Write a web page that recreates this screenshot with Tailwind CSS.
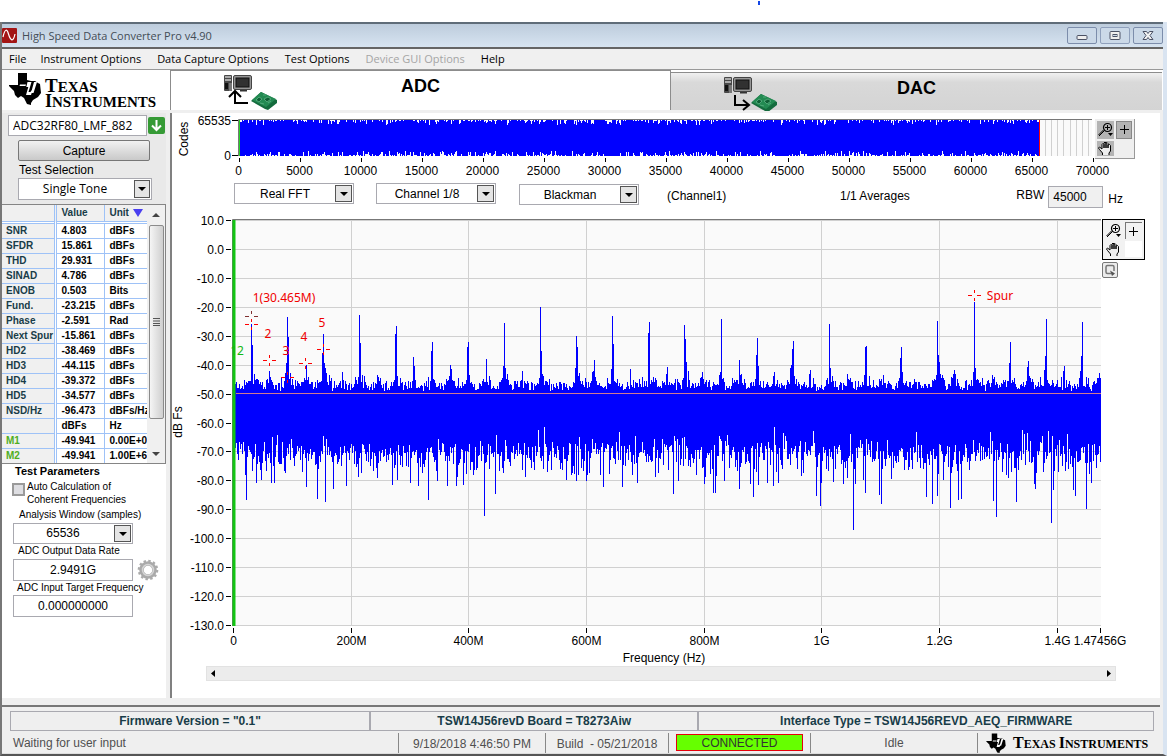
<!DOCTYPE html>
<html lang="en">
<head>
<meta charset="utf-8">
<title>High Speed Data Converter Pro v4.90</title>
<script src="https://cdn.jsdelivr.net/npm/@tailwindcss/browser@4"></script>
</head>
<body class="flex min-h-screen flex-col bg-white font-['Liberation_Sans',Arial,sans-serif] text-[12px] leading-4 text-black">
<svg class="hidden" aria-hidden="true">
  <symbol id="texas" viewBox="0 0 32 33"><path d="M9 1h9v7l4 1h4l3 2 2 1 1 9-3 4-5 3-2 3v2l-4-1-3-6-3-2-3 2-3-3-1-4-5-5 0-1h9z"/><path d="M19.500 4.500h4l-1 3h-3.500zM18.500 10h4l-3 10h2l.8-1.500h1.200l-1.500 4.500h-5l2.300-8h-2zM25 10h3l-3.500 11h-2.500zM11 12.500h6l-.5 1.500h-6z" fill="#fff"/></symbol>
  <symbol id="computer" viewBox="0 0 29 17"><rect x="0" y="0" width="8" height="16" rx="1" fill="#484848"/><path d="M1 2h6M1 5h6" stroke="#c9c9c9" stroke-width="1.500"/><rect x="1" y="8" width="3" height="6" fill="#111"/><rect x="5" y="8" width="3" height="8" fill="#777"/><rect x="9.500" y=".5" width="18" height="14" rx="1.500" fill="#969696" stroke="#444"/><rect x="12" y="3" width="13" height="9" fill="#313131" stroke="#111"/><path d="M16 15h7v1.500h-7z" fill="#333"/></symbol>
  <symbol id="board" viewBox="0 0 26 18"><path d="M0 9L10 0 26 8v3L17 18 14 17z" fill="#146b3d"/><path d="M1 8L10 0 25 7 15 15z" fill="#238a52"/><path d="M5 8l3-3 3 2-3 3zM13 7l4-2 3 2-4 3zM12 3l3 0M9 11l4 1M17 11l3-2" fill="#0f5f35" stroke="#5cb384" stroke-width=".8"/></symbol>
  <symbol id="zoomer" viewBox="0 0 17 15"><circle cx="10.500" cy="5.500" r="4" fill="none" stroke="#000" stroke-width="1.200"/><path d="M10.500 3v5M8 5.500h5" stroke="#000"/><path d="M7.500 8.500L2 14M6.500 8L1.500 13" stroke="#000"/><path d="M11 11h5l-2.500 3z"/></symbol>
  <symbol id="hand" viewBox="0 0 17 15"><path d="M5.500 14V12L2.500 8.500 1.500 7 2.500 6 5 8V3.500L6 2.500 7 3.500V7 2L8 1 9 2V7 2L10 1.500 11 2.500V7 4L12.500 3.500 13.500 4.500V10L12 12V14" fill="#eee" stroke="#000"/></symbol>
</svg>

<header class="flex h-[22px] justify-end pr-[407px] text-blue-700"><span class="mt-px h-[4px] w-[2px] bg-blue-700"></span></header>

<main class="flex grow flex-col border-r-4 border-b-2 border-l-2 border-r-[#d9e4f1] border-b-[#555] border-l-[#777] bg-[#efefef]">
  <div class="flex h-[27px] shrink-0 items-center border-t-2 border-b-2 border-t-[#5f6c78] border-b-[#656565] bg-linear-to-b from-[#bdccdc] to-[#d7e4f1] font-['Open_Sans','Noto_Sans',sans-serif] text-[#444d56]">
    <svg class="mr-[5px] size-[15px]" viewBox="0 0 15 15"><rect width="15" height="15" rx="1" fill="#a31515"/><path d="M1 9C3 0 5 1 6.500 6S11 16 13 6" fill="none" stroke="#fff" stroke-width="1.200"/></svg>
    <h1 class="grow text-[11px]">High Speed Data Converter Pro v4.90</h1>
    <div class="flex gap-[3px]">
      <button aria-label="Minimize" class="flex h-[17px] w-[30px] items-center justify-center rounded-xs border border-[#7c8dab] bg-[#cbd9e8]"><svg class="h-[12px] w-[14px]" viewBox="0 0 14 12"><rect x="2" y="5.500" width="10" height="4" rx="1" fill="#eee" stroke="#4b5164"/></svg></button>
      <button aria-label="Maximize" class="flex h-[17px] w-[30px] items-center justify-center rounded-xs border border-[#8fa0bc] bg-[#cbd9e8]"><svg class="h-[12px] w-[14px]" viewBox="0 0 14 12"><rect x="2" y="1.500" width="10" height="8" rx="1" fill="#eee" stroke="#4b5164"/><rect x="5" y="4.500" width="4" height="2" fill="#cbd9e8" stroke="#4b5164"/></svg></button>
      <button aria-label="Close" class="flex h-[17px] w-[30px] items-center justify-center rounded-xs border border-[#7c8dab] bg-[#cbd9e8]"><svg class="h-[12px] w-[14px]" viewBox="0 0 14 12"><path d="M2 1.500h3.500L7 3.500l1.500-2H12L9 5.500l3 4H8.500L7 7.500l-1.500 2H2l3-4z" fill="#f2f2f2" stroke="#4b5164"/></svg></button>
    </div>
  </div>

  <nav class="flex h-[21px] shrink-0 items-center border-b border-[#999] bg-[#f0f0f0] pl-[7px] font-['Open_Sans','Noto_Sans',sans-serif] text-[11px]">
    <button class="mr-[14px]">File</button><button class="mr-[16px]">Instrument Options</button><button class="mr-[16px]">Data Capture Options</button><button class="mr-[16px]">Test Options</button><button disabled class="mr-[16px] text-[#a5a5a5]">Device GUI Options</button><button>Help</button>
  </nav>

  <div class="flex h-10 shrink-0 bg-white pr-[1px]">
    <div class="flex w-[168px] shrink-0 items-start gap-1 pl-[7px] font-['Liberation_Serif',serif]">
      <svg class="mt-[2px] h-[33px] w-[32px]"><use href="#texas"/></svg>
      <p class="mt-[9px] text-[15px] leading-[14px] font-bold"><span class="text-[19px]">T</span>EXAS<br><span class="text-[18px]">I</span>NSTRUMENTS</p>
    </div>
    <button class="grid flex-[499] grid-cols-[1fr_auto_1fr] items-start border border-b-0 border-[#8c8c8c] bg-white">
      <svg class="ml-[53px] mt-[4px] h-[36px] w-[54px]" viewBox="0 0 54 36"><use href="#computer" width="29" height="17"/><use href="#board" x="27" y="17" width="26" height="18"/><path d="M24 28H11V17M5 22l6-6 6 6" fill="none" stroke="#000" stroke-width="2"/></svg>
      <span class="mt-[5px] text-[18px] leading-5 font-bold">ADC</span>
    </button>
    <button class="mt-[2px] grid flex-[491] grid-cols-[1fr_auto_1fr] items-start border-t border-[#8c8c8c] bg-linear-to-b from-[#f0f0f0] via-[#d9d9d9] via-25% to-[#d4d4d4]">
      <svg class="ml-[53px] mt-[4px] h-[34px] w-[54px]" viewBox="0 0 54 34"><use href="#computer" width="29" height="17"/><use href="#board" x="27" y="17" width="26" height="18"/><path d="M11 18V28H24M19 23l6 5-6 5" fill="none" stroke="#000" stroke-width="2"/></svg>
      <span class="mt-[5px] text-[18px] leading-5 font-bold">DAC</span>
    </button>
  </div>

  <div class="mt-[3px] flex grow pr-[3px]">
    <aside class="flex w-[164px] shrink-0 flex-col bg-white">
      <section class="flex h-[91px] flex-col bg-[#e9e9e9] pl-[6px]">
        <div class="flex items-center gap-px pt-[2px]">
          <input aria-label="Device" value="ADC32RF80_LMF_882" class="h-[21px] w-[139px] border border-[#a9a9b0] bg-white px-1 font-['Open_Sans',sans-serif] text-[12px]">
          <button aria-label="Load device" class="flex size-[17px] items-center justify-center rounded-xs bg-[#359a35]"><svg class="size-[13px]" viewBox="0 0 13 13"><path d="M6.500 1v10M2 6.500l4.500 4.500 4.500-4.500" fill="none" stroke="#fff" stroke-width="2"/></svg></button>
        </div>
        <button class="mt-[4px] ml-[10px] h-[21px] w-[132px] shrink-0 rounded-xs border border-[#777] bg-linear-to-b from-[#f2f2f2] to-[#c9c9c9] text-[12px] leading-4">Capture</button>
        <label for="tone" class="ml-[11px] mt-[1px]">Test Selection</label>
        <div class="relative ml-[10px] w-[134px]">
          <select id="tone" class="h-[22px] w-full appearance-none border border-[#a9a9b0] bg-white pr-[20px] font-['Open_Sans',sans-serif] text-[12px] [text-align-last:center]"><option>Single Tone</option></select>
          <span class="pointer-events-none absolute top-[2px] right-[2px] flex h-[18px] w-[16px] items-center justify-center border border-[#555] bg-[#e4e4e4]"><svg class="h-1 w-2" viewBox="0 0 8 4"><path d="M0 0h8L4 4z"/></svg></span>
        </div>
      </section>
      <div class="flex h-[260px] shrink-0 overflow-hidden border-y border-r border-[#858585] bg-[#f0f0f0]">
        <div class="w-[145px] overflow-hidden bg-white">
          <table class="w-[170px] table-fixed border-collapse text-left text-[10px] leading-[14px] font-bold">
            <colgroup><col class="w-[53px]"><col class="w-[49px]"><col class="w-[68px]"></colgroup>
            <thead class="bg-[#f0f0f0] text-[#183c48]"><tr class="h-[17px] border-b-3 border-double border-[#9ec2f7]"><th class="border-r-3 border-double border-[#9ec2f7]"></th><th class="border-r border-[#9ec2f7] pl-[5px]">Value</th><th class="pl-[5px]"><span class="flex items-center gap-1">Unit<svg class="h-2 w-[10px]" viewBox="0 0 10 8"><path d="M0 0h10L5 8z" fill="#4a3ff0"/></svg></span></th></tr></thead>
            <tbody id="metrics"></tbody>
          </table>
        </div>
        <div class="flex w-[18px] flex-col items-center">
          <svg class="my-2 h-[4px] w-[8px] shrink-0" viewBox="0 0 8 4"><path d="M0 4h8L4 0z" fill="#444"/></svg>
          <div class="flex h-[194px] w-[15px] shrink-0 items-center justify-center rounded-xs border border-[#8b8b8b] bg-linear-to-r from-[#f5f5f5] to-[#cfcfcf]"><svg class="size-2" viewBox="0 0 8 8"><path d="M1 .5h7M1 3h7M1 5.500h7M1 7.500h7" stroke="#555"/></svg></div>
          <svg class="mt-[33px] h-[4px] w-[8px] shrink-0" viewBox="0 0 8 4"><path d="M0 0h8L4 4z" fill="#444"/></svg>
        </div>
      </div>
      <section class="flex flex-col pl-[11px] text-[10px] leading-[13px]">
        <h2 class="ml-[2px] text-[11px] leading-[15px] font-bold">Test Parameters</h2>
        <div class="flex items-start gap-[2px] pt-px"><input id="auto" type="checkbox" class="mt-[3px] -ml-px size-[13px] shrink-0 appearance-none border-2 border-[#9a9a9a] bg-[#dedee2]"><label for="auto">Auto Calculation of<br>Coherent Frequencies</label></div>
        <label for="win" class="ml-[6px] mt-[2px]">Analysis Window (samples)</label>
        <div class="relative mt-[2px] w-[120px]">
          <select id="win" class="h-[21px] w-full appearance-none border border-[#a9a9b0] bg-white pr-[20px] text-[12px] [text-align-last:center]"><option>65536</option></select>
          <span class="pointer-events-none absolute top-[2px] right-[2px] flex h-[17px] w-[17px] items-center justify-center border border-[#555] bg-[#e4e4e4]"><svg class="h-1 w-2" viewBox="0 0 8 4"><path d="M0 0h8L4 4z"/></svg></span>
        </div>
        <label for="rate" class="ml-[5px]">ADC Output Data Rate</label>
        <div class="mt-[2px] flex items-center gap-1"><input id="rate" value="2.9491G" class="h-[22px] w-[120px] border border-[#a9a9b0] text-center text-[12px]">
          <button aria-label="Settings"><svg class="size-[22px]" viewBox="-11 -11 22 22"><circle r="6.500" fill="none" stroke="#aaa" stroke-width="4.500"/><circle r="9" fill="none" stroke="#aaa" stroke-width="2.600" stroke-dasharray="2.400 2.312"/><circle r="5.500" fill="none" stroke="#d5d5d5" stroke-width="1.500"/></svg></button></div>
        <label for="freq" class="ml-[4px]">ADC Input Target Frequency</label>
        <input id="freq" value="0.000000000" class="mt-px h-[22px] w-[120px] border border-[#a9a9b0] text-center text-[12px]">
      </section>
    </aside>

    <section class="ml-[4px] grow border-l-2 border-[#808080] bg-white">
      <div class="flex pr-[25px]">
        <svg class="min-w-0 flex-1 overflow-visible" viewBox="172 113 923 69" font-size="12" text-anchor="middle" role="img" aria-label="Codes">
          <text transform="translate(188 139) rotate(-90)">Codes</text>
          <text x="231" y="125" text-anchor="end">65535</text><text x="231" y="160" text-anchor="end">0</text>
          <path d="M232 120.500h6M232 155.500h6" stroke="#000"/>
          <rect x="239" y="120" width="853" height="36" fill="#fafafa"/>
          <path d="M1045.500 120v36M1051.500 120v36M1057.500 120v36M1063.500 120v36M1070.500 120v36M1076.500 120v36M1082.500 120v36M1088.500 120v36" stroke="#d0d0d0"/>
          <path id="codes" stroke="#0000ff" shape-rendering="crispEdges"/>
          <path d="M238.500 156V119.500H1092" fill="none" stroke="#777"/><path d="M239.500 120v36" stroke="#26d426"/><path d="M1039.500 120v36" stroke="red"/>
          <g id="codeAxis"></g>
        </svg>
        <div class="mt-[6px] grid h-[40px] w-[40px] shrink-0 grid-cols-2 gap-[2px] border-r border-b border-[#999] bg-[#efefef] p-[2px]">
          <button aria-label="Zoom" class="bg-[#b4b4b4]"><svg class="h-[15px] w-[17px]"><use href="#zoomer"/></svg></button>
          <button aria-label="Cursor" class="border border-[#888] bg-[#b4b4b4]"><svg class="h-[15px] w-[15px]" viewBox="0 0 15 15"><path d="M7.500 3v9M3 7.500h9" stroke="#000"/></svg></button>
          <button aria-label="Pan" class="bg-[#b4b4b4]"><svg class="h-[15px] w-[17px]"><use href="#hand"/></svg></button>
        </div>
      </div>

      <div class="flex h-[26px] items-start pt-px pl-[62px] whitespace-nowrap">
        <div class="relative mr-[22px] w-[120px]"><select aria-label="Plot type" class="h-[21px] w-full appearance-none border border-[#a9a9b0] bg-white pr-[18px] [text-align-last:center]"><option>Real FFT</option></select><span class="pointer-events-none absolute top-[2px] right-[2px] flex size-[17px] items-center justify-center border border-[#555] bg-[#e4e4e4]"><svg class="h-1 w-2" viewBox="0 0 8 4"><path d="M0 0h8L4 4z"/></svg></span></div>
        <div class="relative mr-[23px] w-[120px]"><select aria-label="Channel" class="h-[21px] w-full appearance-none border border-[#a9a9b0] bg-white pr-[18px] [text-align-last:center]"><option>Channel 1/8</option></select><span class="pointer-events-none absolute top-[2px] right-[2px] flex size-[17px] items-center justify-center border border-[#555] bg-[#e4e4e4]"><svg class="h-1 w-2" viewBox="0 0 8 4"><path d="M0 0h8L4 4z"/></svg></span></div>
        <div class="relative mt-px mr-[28px] w-[120px]"><select aria-label="Window" class="h-[21px] w-full appearance-none border border-[#a9a9b0] bg-white pr-[18px] [text-align-last:center]"><option>Blackman</option></select><span class="pointer-events-none absolute top-[2px] right-[2px] flex size-[17px] items-center justify-center border border-[#555] bg-[#e4e4e4]"><svg class="h-1 w-2" viewBox="0 0 8 4"><path d="M0 0h8L4 4z"/></svg></span></div>
        <span class="mt-[5px] w-[173px]">(Channel1)</span>
        <span class="mt-[5px] grow">1/1 Averages</span>
        <label for="rbw" class="mt-1 mr-1">RBW</label>
        <input id="rbw" value="45000" class="mt-[3px] h-[22px] w-[55px] border border-[#a9a9b0] bg-[#f0f0f0] px-1 text-[12px]">
        <span class="mt-2 mr-[37px] ml-[5px] text-[12px]">Hz</span>
      </div>

      <div class="flex pr-[15px]">
        <svg class="min-w-0 flex-1 overflow-visible" viewBox="172 208 930 458" font-size="12" text-anchor="middle" role="img" aria-label="FFT spectrum">
          <rect x="232" y="220" width="869" height="406" fill="#fafafa"/>
          <g id="fftAxis"></g>
          <path id="fft" stroke="#0000ff" shape-rendering="crispEdges"/>
          <path d="M236 393.500H1101" stroke="#d07a90"/>
          <path d="M232.500 626V219.500H1101" fill="none" stroke="#777"/>
          <path d="M234 220v406" stroke="#12c512" stroke-width="3"/>
          <text x="237" y="355" fill="#12b812" font-family="Noto Sans">12</text>
          <g id="cursors" fill="none" stroke="red"></g>
          <g fill="#f00000" font-family="Noto Sans"><text x="284" y="302">1(30.465M)</text><text x="268" y="338">2</text><text x="286" y="355">3</text><text x="304" y="341">4</text><text x="322" y="327">5</text><text x="1000" y="300">Spur</text></g>
          <text transform="translate(182 422) rotate(-90)">dB Fs</text>
          <text x="664" y="662">Frequency (Hz)</text>
        </svg>
        <div class="mt-[11px] w-[43px] shrink-0">
          <div class="grid h-[41px] grid-cols-2 gap-[2px] border border-black bg-[#f2f2f2] p-[2px]">
            <button aria-label="Zoom graph"><svg class="h-[15px] w-[17px]"><use href="#zoomer"/></svg></button>
            <button aria-label="Graph cursor" class="border-t border-l border-[#777]"><svg class="h-[15px] w-[15px]" viewBox="0 0 15 15"><path d="M7.500 3v9M3 7.500h9" stroke="#000"/></svg></button>
            <button aria-label="Pan graph"><svg class="h-[15px] w-[17px]"><use href="#hand"/></svg></button><span class="bg-white"></span>
          </div>
          <button aria-label="Reset graph" class="mt-[2px] block size-4 rounded-xs border border-[#777] bg-[#ececec]"><svg class="size-[14px]" viewBox="0 0 14 14"><path d="M8 10.500H4.500Q3 10.500 3 9V4Q3 2.500 4.500 2.500h5Q11 2.500 11 4v4" fill="none" stroke="#777" stroke-width="1.500"/><path d="M7 7.500l5 3-3 2.500z" fill="#555"/></svg></button>
        </div>
      </div>
      <div class="mr-[44px] ml-[34px] flex h-[15px] items-center justify-between border border-[#e2e2e2] bg-[#ececec] px-1"><svg class="h-[7px] w-1" viewBox="0 0 4 7"><path d="M4 0v7L0 3.500z"/></svg><svg class="h-[7px] w-1" viewBox="0 0 4 7"><path d="M0 0v7l4-3.500z"/></svg></div>
    </section>
  </div>

  <footer class="mt-[7px] mr-[3px] shrink-0 border-t-2 border-[#777] pt-[4px]">
    <div class="mr-[6px] ml-[8px] flex h-[20px] text-center leading-[19px] font-bold text-[#183c48]">
      <p class="flex-[360] border border-[#a9a9b0]">Firmware Version = "0.1"</p><p class="flex-[328] border border-[#a9a9b0]">TSW14J56revD Board = T8273Aiw</p><p class="flex-[456] border border-[#a9a9b0]">Interface Type = TSW14J56REVD_AEQ_FIRMWARE</p>
    </div>
    <div class="mt-[2px] flex h-[21px] items-center border-b border-[#ddd] text-[#505050]">
      <span class="grow pl-[11px]">Waiting for user input</span>
      <span class="h-full w-[147px] border-l border-[#888] pt-[3px] text-center">9/18/2018 4:46:50 PM</span>
      <span class="h-full w-[123px] border-l border-[#888] pt-[3px] text-center whitespace-pre">Build  - 05/21/2018</span>
      <span class="h-full w-[142px] border-l border-[#888] px-[7px] pt-px"><span class="block h-[17px] border border-red-600 bg-[#66ff00] text-center leading-[17px] text-[#333]">CONNECTED</span></span>
      <span class="h-full w-[167px] border-l border-[#888] pt-[2px] text-center">Idle</span>
      <span class="flex h-full w-[183px] items-center gap-[7px] border-l border-[#888] pl-[8px] font-['Liberation_Serif',serif] text-[12px] font-bold whitespace-nowrap text-black"><svg class="size-[20px]"><use href="#texas"/></svg><span><span class="text-[16px]">T</span>EXAS <span class="text-[16px]">I</span>NSTRUMENTS</span></span>
    </div>
  </footer>
</main>

<script>
const rows = [['SNR','4.803','dBFs'],['SFDR','15.861','dBFs'],['THD','29.931','dBFs'],['SINAD','4.786','dBFs'],['ENOB','0.503','Bits'],['Fund.','-23.215','dBFs'],['Phase','-2.591','Rad'],['Next Spur','-15.861','dBFs'],['HD2','-38.469','dBFs'],['HD3','-44.115','dBFs'],['HD4','-39.372','dBFs'],['HD5','-34.577','dBFs'],['NSD/Hz','-96.473','dBFs/Hz'],['','dBFs','Hz'],['M1','-49.941','0.00E+0'],['M2','-49.941','1.00E+6']];
document.getElementById('metrics').innerHTML = rows.map(([a, b, c]) =>
  `<tr class="h-[15px] border-b border-[#9ec2f7]"><th class="overflow-hidden border-r-3 border-double border-[#9ec2f7] bg-[#f0f0f0] pl-1 whitespace-nowrap ${a[0] === 'M' ? 'text-[#4fae22]' : 'text-[#183c48]'}">${a}</th><td class="border-r border-[#9ec2f7] pl-[5px]">${b}</td><td class="pl-[5px]">${c}</td></tr>`).join('');

// Repeatable noise so that both plots always look the same.
let seed = 4711;
const rnd = () => (seed = (seed * 1103515245 + 12345) % 2147483648) / 2147483648;

let d = '';
for (let x = 240; x < 1039; x++) d += `M${x + .5} ${120 + Math.round(rnd() ** 5 * 5)}V${156 - Math.round(rnd() ** 5 * 5)}`;
document.getElementById('codes').setAttribute('d', d);
let axis = '';
for (let i = 0; i <= 14; i++) axis += `<path d="M${239.5 + 61 * i} 158v4" stroke="#000"/><text x="${238.5 + 61 * i}" y="175">${i * 5000}</text>`;
document.getElementById('codeAxis').innerHTML = axis;

axis = '';
for (let i = 0; i <= 14; i++) {
  const y = Math.round(220 + i * 28.93) + .5;
  axis += `<path d="M233 ${y}H1101" stroke="#d0d0d0"/><path d="M226 ${y}h5" stroke="#000"/><text x="224" y="${y + 4}" text-anchor="end">${(10 - i * 10).toFixed(1)}</text>`;
}
['0', '200M', '400M', '600M', '800M', '1G', '1.2G', '1.4G'].forEach((t, i) => {
  const x = Math.round(233 + i * 117.65) + .5;
  axis += `<path d="M${x} 220v406" stroke="#d0d0d0"/><path d="M${x} 628v5" stroke="#000"/><text x="${x}" y="645">${t}</text>`;
});
axis += '<path d="M1100.5 628v5" stroke="#000"/><text x="1100" y="645">1.47456G</text>';
document.getElementById('fftAxis').innerHTML = axis;

const peaks = {251:324,252:345,254:374,269:371,287:317,288:337,286:363,306:365,323:334,322:353,324:363,325:368,342:372,359:315,360:343,377:375,396:326,395:334,413:357,414:366,432:342,431:351,450:365,451:369,468:342,467:347,486:359,504:323,503:366,505:368,522:371,540:307,541:351,542:374,576:336,577:347,575:368,594:360,593:371,612:316,613:344,611:369,630:369,649:322,648:333,667:367,684:325,685:339,686:362,688:371,702:372,721:319,720:372,739:360,757:338,756:355,758:366,774:372,793:341,792:349,791:365,810:370,829:324,830:368,847:374,866:346,865:347,864:375,883:375,901:347,900:358,902:372,937:321,938:355,939:362,940:374,954:370,974:302,975:368,973:372,992:375,1010:342,1009:363,1028:361,1027:367,1046:319,1045:356,1044:370,1064:366,1082:322,1081:356,1080:371,1099:373};
const dips = {246:500,256:483,261:480,271:483,274:483,306:487,317:499,325:502,333:489,346:486,392:485,418:486,428:500,447:486,456:486,463:485,484:516,495:494,525:477,571:475,576:481,586:481,603:487,622:487,632:475,637:483,655:477,673:494,678:481,713:493,715:493,724:481,739:489,753:497,758:485,767:483,773:486,778:483,801:476,816:496,820:506,821:483,833:482,843:484,853:530,855:484,865:493,879:495,881:504,891:479,926:497,932:504,937:496,943:480,950:508,958:500,961:499,993:501,996:517,1016:502,1035:489,1051:523,1053:490,1073:490,1075:496,1086:509};
const ks = Object.keys(peaks).map(Number);
d = '';
for (let x = 233; x <= 1100; x++) {
  const near = Math.min(...ks.map(k => Math.abs(k - x)));
  const top = peaks[x] || Math.round(391 - rnd() * 9 - rnd() ** 5 * 6 - Math.max(0, 6 - near) * rnd() * 2);
  const low = dips[x] || Math.round(438 + (rnd() + rnd()) * 14 + rnd() ** 3 * 24 - rnd() ** 6 * 16);
  d += `M${x + .5} ${top}V${low}`;
}
document.getElementById('fft').setAttribute('d', d);
document.getElementById('cursors').innerHTML = [[251,316,'#803030'],[251,324],[269,360],[287,377],[305,363],[323,349],[974,295]].map(([x, y, c]) =>
  `<path d="M${x - 6} ${y + .5}h4M${x + 3} ${y + .5}h4M${x + .5} ${y - 5}v3M${x + .5} ${y + 3}v3" stroke="${c || 'red'}"/>`).join('');
</script>
</body>
</html>
